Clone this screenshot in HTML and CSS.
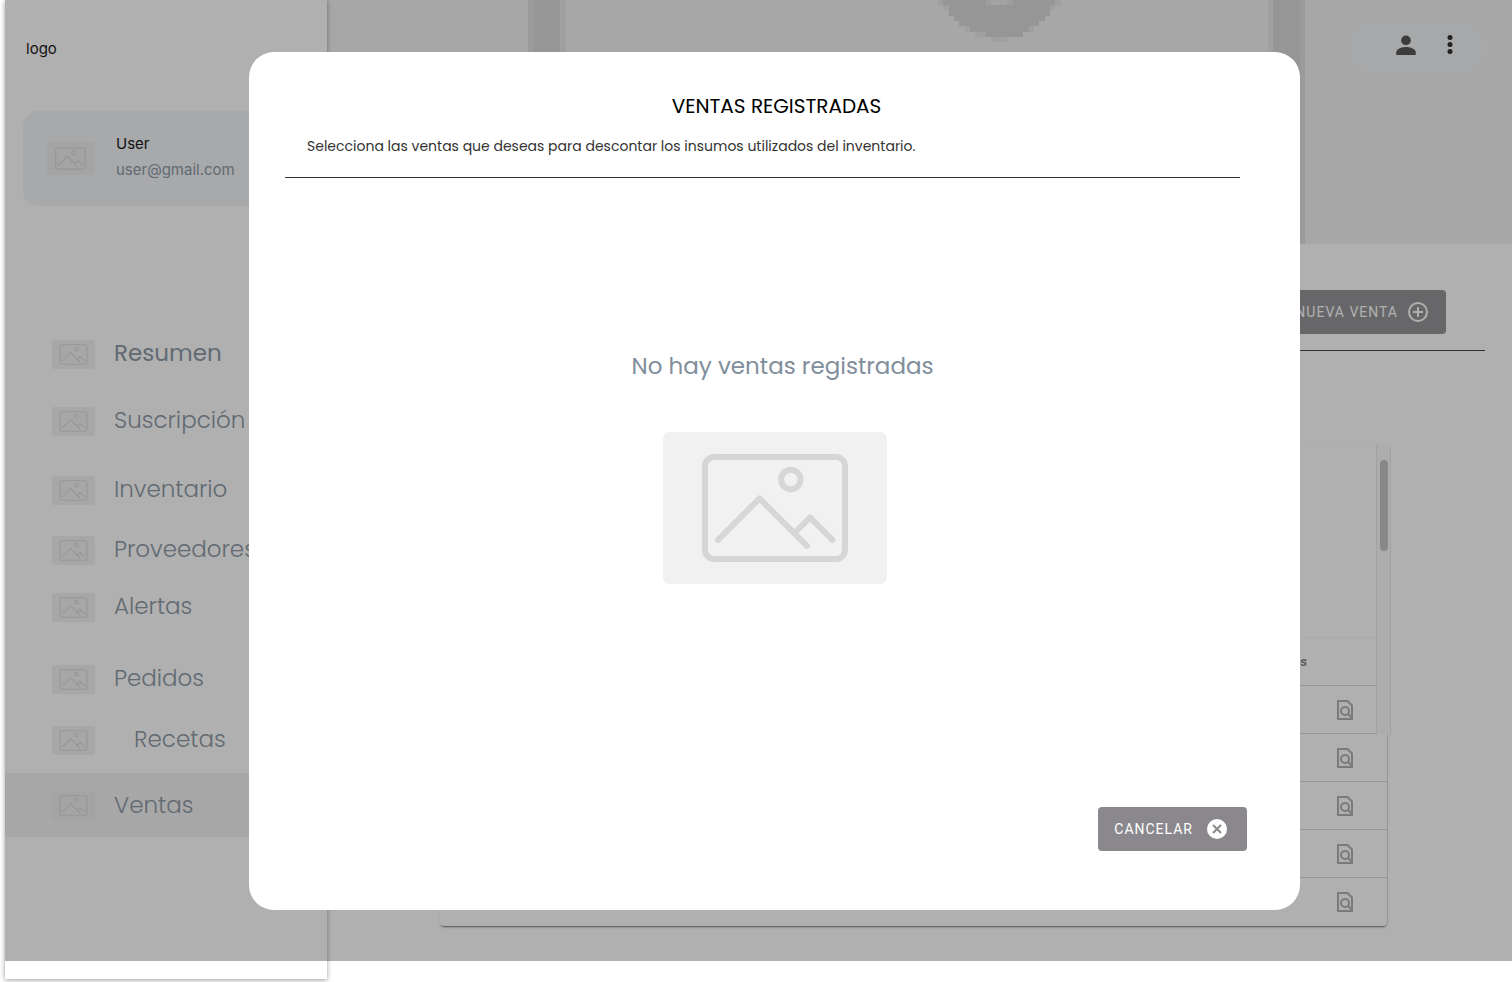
FILE: index.html
```html
<!DOCTYPE html>
<html lang="es">
<head>
<meta charset="utf-8">
<title>Ventas</title>
<link rel="stylesheet" href="styles.css">
</head>
<body>
<svg class="defs" width="0" height="0" aria-hidden="true">
  <symbol id="picture" viewBox="0 0 224 152">
    <g fill="none" stroke="#d6d6d6" stroke-width="6" stroke-linecap="round" stroke-linejoin="round">
      <rect x="42" y="25" width="140" height="102" rx="9"/>
      <circle cx="127.800" cy="47.500" r="9.700"/>
      <path d="M55 108 96.500 66.500 144 114M131 101.500 147 85.500 169.500 108"/>
    </g>
  </symbol>
  <symbol id="find" viewBox="0 0 24 24">
    <path fill="none" stroke="currentColor" stroke-width="2" stroke-linejoin="round" d="M5 3h9.500L19 7.500V21H5z"/>
    <circle fill="none" stroke="currentColor" stroke-width="2" cx="12" cy="13" r="4"/>
    <path stroke="currentColor" stroke-width="2" d="m14.800 15.800 4.500 4.500"/>
  </symbol>
</svg>
<div class="page">
  <aside class="sidebar">
    <p class="logo">logo</p>
    <section class="user-card">
      <svg class="thumb user-thumb"><use href="#picture"/></svg>
      <div class="user-text">
        <p>User</p>
        <p class="user-mail">user@gmail.com</p>
      </div>
    </section>
    <nav>
      <ul class="menu">
        <li><a class="strong" href="#"><svg class="thumb"><use href="#picture"/></svg><span>Resumen</span></a></li>
        <li><a href="#"><svg class="thumb"><use href="#picture"/></svg><span>Suscripción</span></a></li>
        <li><a href="#"><svg class="thumb"><use href="#picture"/></svg><span>Inventario</span></a></li>
        <li><a href="#"><svg class="thumb"><use href="#picture"/></svg><span>Proveedores</span></a></li>
        <li><a href="#"><svg class="thumb"><use href="#picture"/></svg><span>Alertas</span></a></li>
        <li><a href="#"><svg class="thumb"><use href="#picture"/></svg><span>Pedidos</span></a></li>
        <li><a class="nested" href="#"><svg class="thumb"><use href="#picture"/></svg><span>Recetas</span></a></li>
        <li class="active"><a href="#" aria-current="page"><svg class="thumb"><use href="#picture"/></svg><span>Ventas</span></a></li>
      </ul>
    </nav>
  </aside>
  <main class="main">
    <header class="hero">
      <svg class="hero-picture" viewBox="0 0 1191 244" preserveAspectRatio="xMidYMid slice" shape-rendering="crispEdges">
        <path fill="#ddd" d="M207 0h38v244h-38zM947 0h37v244h-37z"/>
        <path fill="#e5e5e5" d="M239 0h6v244h-6zM947 0h5v244h-5z"/>
        <path fill="#d6d6d6" d="M213 0h26v244h-26zM952 0h27v244h-27z"/>
        <g transform="translate(617 -.333) scale(5.333)">
          <path fill="#e5e5e5" d="M0 0H23V1H22V2H21V3H20V4H19V5H18V6H16V7H13V8H10V7H7V6H5V5H4V4H3V3H2V2H1V1H0z"/>
          <path fill="#d6d6d6" d="M1 0H22V1H21V3H20V4H19V5H17V6H16V7H9V6H7V6H6V5H4V4H3V3H2V1H1z"/>
          <path fill="#e2e2e2" d="M9 0h5v1H9z"/>
          <path fill="#ebebeb" d="M10 0h3v1h-3z"/>
        </g>
      </svg>
      <div class="account">
        <button type="button" aria-label="Cuenta"><svg width="30" height="30" viewBox="0 0 24 24" fill="#444"><circle cx="12" cy="8.300" r="3.900"/><path d="M4.200 20v-2.300c0-2.500 4-4.200 7.800-4.200s7.800 1.700 7.800 4.200V20z"/></svg></button>
        <button type="button" aria-label="Más opciones"><svg width="30" height="30" viewBox="0 0 30 30" fill="#1a1a1a"><circle cx="15" cy="7.500" r="2.500"/><circle cx="15" cy="14.500" r="2.500"/><circle cx="15" cy="21.500" r="2.500"/></svg></button>
      </div>
    </header>
    <div class="toolbar">
      <button class="btn" type="button">NUEVA VENTA
        <svg width="24" height="24" viewBox="0 0 24 24" fill="none" stroke="currentColor" stroke-width="2"><circle cx="12" cy="12" r="9"/><path d="M12 7v10M7 12h10"/></svg>
      </button>
    </div>
    <div class="list">
      <table class="sales">
        <thead><tr><th>Detalles</th><td></td></tr></thead>
        <tbody>
          <tr><td></td><td><button type="button" aria-label="Ver detalle"><svg width="24" height="24"><use href="#find"/></svg></button></td></tr>
          <tr><td></td><td><button type="button" aria-label="Ver detalle"><svg width="24" height="24"><use href="#find"/></svg></button></td></tr>
          <tr><td></td><td><button type="button" aria-label="Ver detalle"><svg width="24" height="24"><use href="#find"/></svg></button></td></tr>
          <tr><td></td><td><button type="button" aria-label="Ver detalle"><svg width="24" height="24"><use href="#find"/></svg></button></td></tr>
          <tr><td></td><td><button type="button" aria-label="Ver detalle"><svg width="24" height="24"><use href="#find"/></svg></button></td></tr>
        </tbody>
      </table>
      <div class="scrollbar"><div class="scroll-thumb"></div></div>
    </div>
  </main>
  <div class="overlay">
    <section class="modal" role="dialog" aria-modal="true" aria-labelledby="modal-title">
      <h2 id="modal-title">VENTAS REGISTRADAS</h2>
      <p class="intro">Selecciona las ventas que deseas para descontar los insumos utilizados del inventario.</p>
      <div class="empty">
        <h3>No hay ventas registradas</h3>
        <svg class="empty-picture"><use href="#picture"/></svg>
      </div>
      <footer>
        <button class="btn cancel" type="button">CANCELAR
          <svg width="24" height="24" viewBox="0 0 24 24"><circle cx="12" cy="12" r="10" fill="#fff"/><path stroke="#8a888d" stroke-width="2" d="m8 8 8 8M16 8l-8 8"/></svg>
        </button>
      </footer>
    </section>
  </div>
</div>
</body>
</html>
```
FILE: styles.css
```css
* { box-sizing: border-box; margin: 0; }

body {
  background: #fff;
  color: #000;
  font-family: Poppins, Inter, sans-serif;
  overflow: hidden;
}

button {
  border: 0;
  padding: 0;
  background: none;
  font: inherit;
  color: inherit;
  cursor: pointer;
}

svg { display: block; }

.defs { position: absolute; }

.page {
  position: relative;
  display: flex;
  align-items: stretch;
  min-height: 100vh;
  padding: 0 0 3px 5px;
}

/* Sidebar */
.sidebar {
  position: relative;
  z-index: 1;
  flex: 0 0 322px;
  margin-right: -6px;
  padding-top: 37px;
  background: #fff;
  box-shadow: 0 1px 5px rgba(0, 0, 0, .4);
}

.logo {
  padding-left: 21px;
  font: 15px/24px Inter, sans-serif;
}

.user-card {
  display: flex;
  align-items: center;
  gap: 22px;
  height: 95px;
  margin: 50px 18px 134px;
  padding-left: 24px;
  border-radius: 15px;
  background: #f0f4f7;
  font: 15px/26px Inter, sans-serif;
}

.user-text { padding-bottom: 4px; }
.user-mail { color: #818e9b; }

.thumb {
  flex: none;
  width: 43px;
  height: 29px;
  border-radius: 2px;
  background: #f1f1f1;
}

.user-thumb { width: 47px; height: 33px; }

.user-thumb,
.active .thumb { background: #ececec; }

.menu {
  display: grid;
  grid-template-rows: 67px 69px 60px 57px 72px 61px 47px 64px;
  padding: 0;
  list-style: none;
}

.menu a {
  display: flex;
  align-items: center;
  gap: 19px;
  height: 29px;
  padding-left: 47px;
  color: #818e9b;
  font-size: 23px;
  font-weight: 300;
  line-height: 36px;
  text-decoration: none;
}

.menu span { padding-bottom: 4px; }
.menu .strong { font-weight: 400; }
.menu .nested { gap: 39px; }
.menu .active { background: #f1f1f1; }
.menu .active a { height: 64px; }
.menu .active span { padding-bottom: 0; }

/* Main column */
.main { flex: 1; min-width: 0; }

.hero {
  position: relative;
  height: 244px;
  background: #f1f1f1;
}

.hero-picture { width: 100%; height: 100%; }

.account {
  position: absolute;
  top: 20px;
  right: 25px;
  display: flex;
  gap: 14px;
  padding: 10px 22px 14px 42px;
  border-radius: 27px;
  background: #f0f3f5;
}

.toolbar {
  display: flex;
  justify-content: flex-end;
  margin: 0 27px 0 24px;
  padding: 46px 39px 16px;
  border-bottom: 1px solid #333;
}

.btn {
  display: flex;
  align-items: center;
  gap: 8px;
  height: 44px;
  padding: 0 16px;
  border-radius: 4px;
  background: #8a888d;
  color: #fff;
  font: 400 14px/20px Roboto, sans-serif;
  letter-spacing: 1px;
}

.list {
  position: relative;
  margin: 94px 125px 0 119px;
  padding-top: 192px;
  border-radius: 4px;
  box-shadow: 0 2px 2px -1px rgba(0, 0, 0, .6), 1px 0 1px rgba(0, 0, 0, .15);
}

.sales {
  width: 100%;
  border-collapse: collapse;
  font: 700 13px/20px Roboto, sans-serif;
  color: #777;
}

.sales tr { height: 48px; border-top: 1px solid #d6d6d6; }
.sales thead tr { border-color: #f4f4f4; }
.sales th { padding: 0; text-align: right; }
.sales td { padding: 0; }
.sales td:last-child { width: 80px; padding-left: 26px; }
.sales button { display: block; color: #a8a8a8; }

.scrollbar {
  position: absolute;
  top: 0;
  right: -4px;
  width: 15px;
  height: 290px;
  padding: 15px 3px;
  border: solid #e8e8e8;
  border-width: 0 1px;
  background: #fafafa;
}

.scroll-thumb {
  width: 8px;
  height: 91px;
  border-radius: 4px;
  background: #bfbfbf;
}

/* Dialog */
.overlay {
  position: absolute;
  z-index: 2;
  inset: 0 0 21px 5px;
  display: flex;
  padding: 52px 212px 51px 244px;
  background: rgba(47, 47, 47, .38);
}

.modal {
  flex: 1;
  display: flex;
  flex-direction: column;
  padding-top: 39px;
  border-radius: 25px;
  background: #fff;
}

.modal h2 {
  padding-left: 4px;
  font-size: 20px;
  font-weight: 400;
  line-height: 30px;
  text-align: center;
}

.intro {
  margin: 15px 60px 0 36px;
  padding: 0 22px 21px;
  border-bottom: 1px solid #333;
  color: #333;
  font-size: 14px;
  line-height: 20px;
}

.empty {
  display: flex;
  flex-direction: column;
  align-items: center;
  gap: 48px;
  padding-top: 170px;
}

.empty h3 {
  padding-left: 16px;
  color: #818e9b;
  font-size: 23px;
  font-weight: 400;
  line-height: 36px;
}

.empty-picture {
  width: 224px;
  height: 152px;
  border-radius: 7px;
  background: #f1f1f1;
}

.modal footer {
  display: flex;
  justify-content: flex-end;
  margin-top: auto;
  padding: 0 53px 59px;
}

.cancel { gap: 12px; padding-right: 18px; }
```
